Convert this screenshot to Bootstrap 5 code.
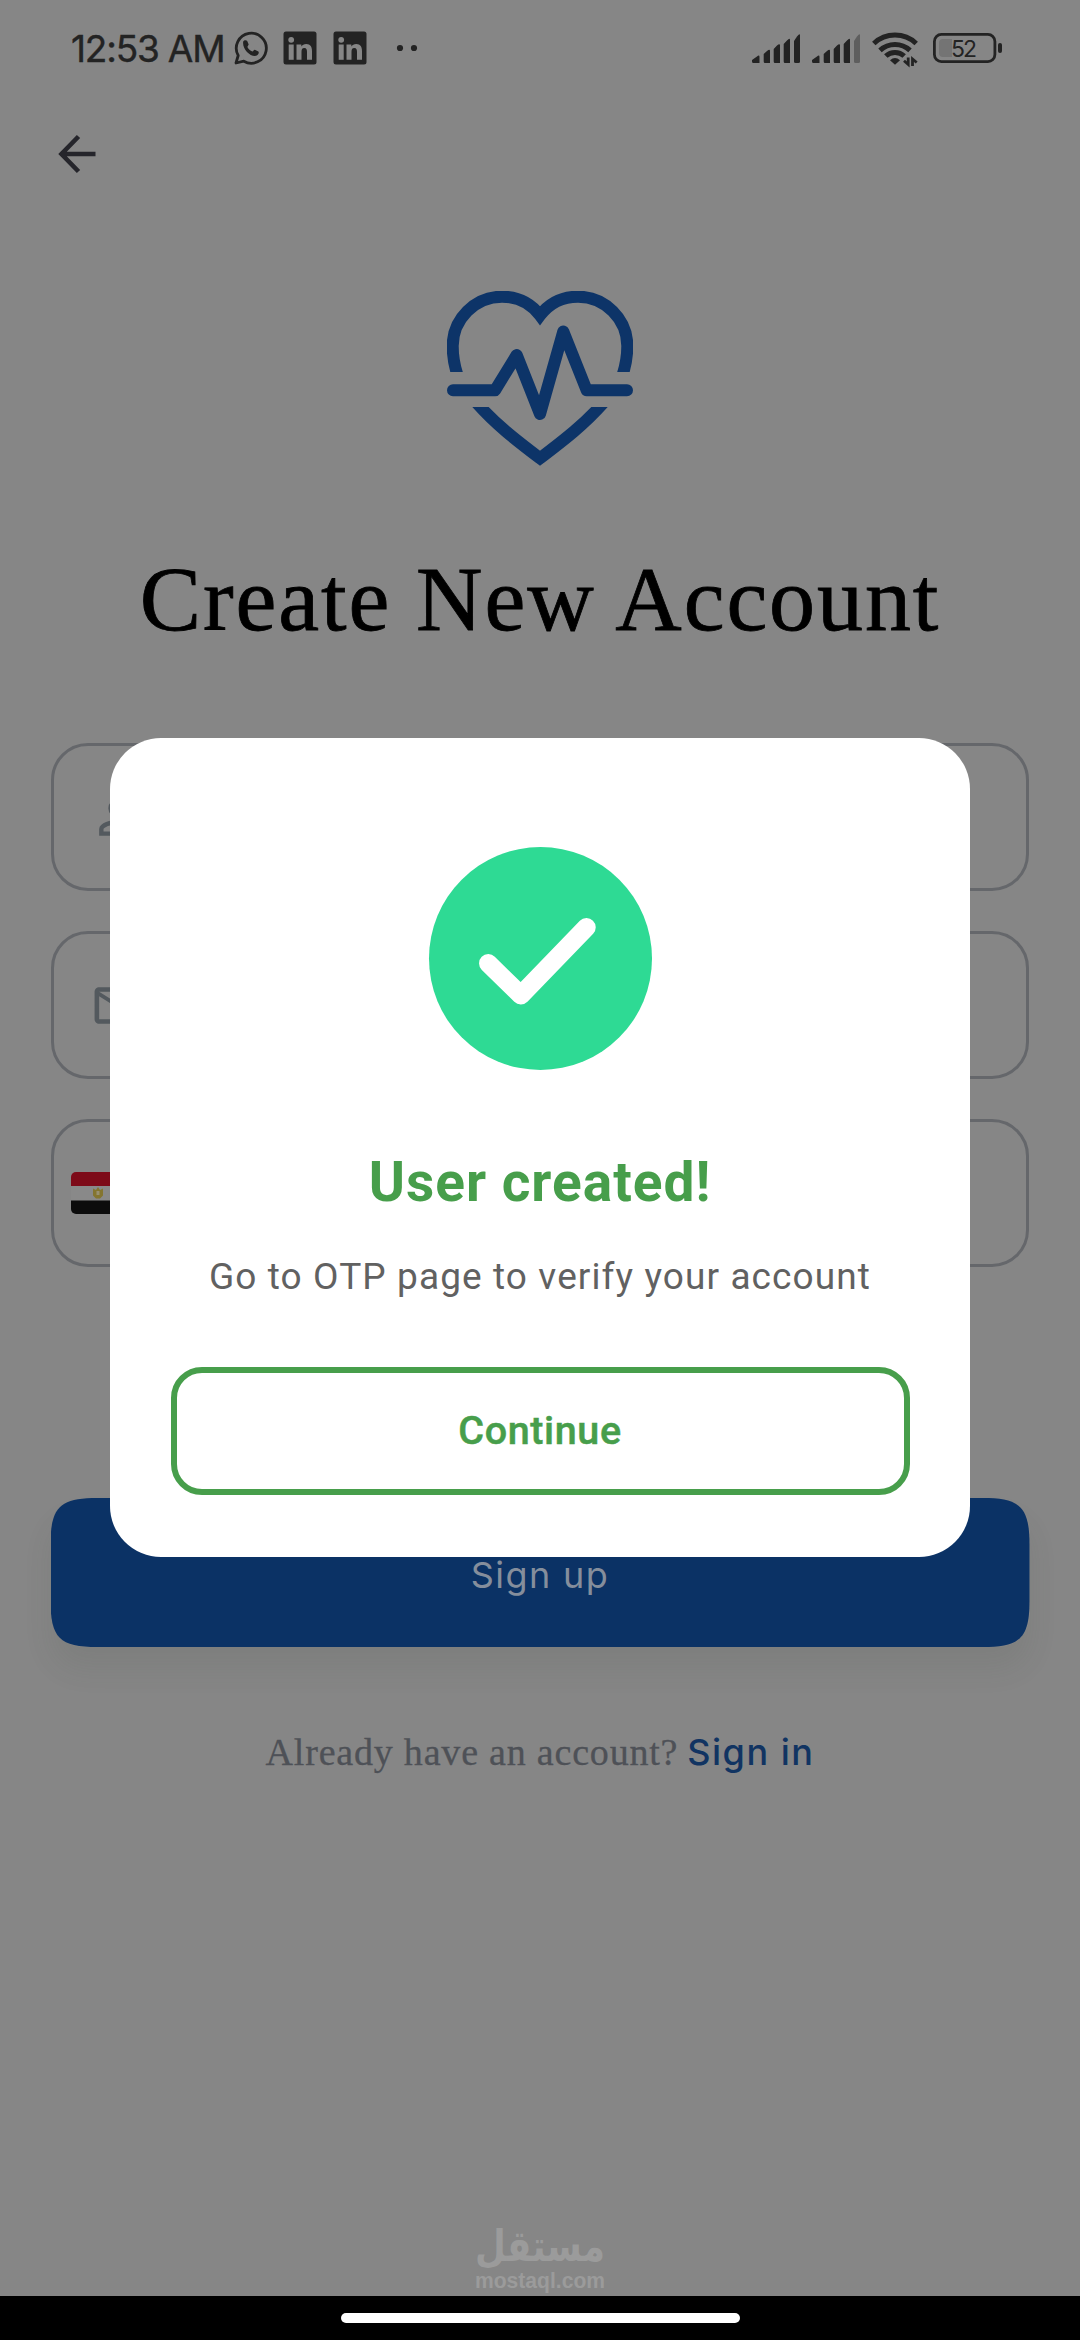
<!DOCTYPE html>
<html lang="en">
<head>
<meta charset="utf-8">
<meta name="viewport" content="width=device-width, initial-scale=1">
<title>Create New Account</title>
<link href="https://cdn.jsdelivr.net/npm/bootstrap@5.3.0/dist/css/bootstrap.min.css" rel="stylesheet">
<style>
  body { width: 1080px; height: 2340px; background: #868686; font-family: Roboto, sans-serif; overflow: hidden; }
  svg { display: block; flex: none; overflow: visible; }
  .status-bar { height: 96px; padding: 0 78px 0 71px; color: #232323; }
  .clock { font: 400 37px/1 Inter, sans-serif; letter-spacing: -1.2px; width: 163px; white-space: nowrap; -webkit-text-stroke: .4px #232323; }
  .gap-lin { margin-left: 15px; }
  .gap-dots { margin-left: 30px; }
  .gap-sig { margin-left: 12px; }
  .app-head { height: 116px; padding: 0 57px; }
  .page-title { font: 400 92px/108px "Liberation Serif", serif; letter-spacing: 1.9px; color: #000; margin-top: 79px; white-space: nowrap; -webkit-text-stroke: .8px #000; }
  .logo-row { padding-top: 79px; }
  .fields { margin: 90px 51px 0; gap: 40px; }
  .field { height: 148px; border: 3px solid #65676b; border-radius: 37px; padding-left: 36px; }
  .field.phone { padding-left: 17px; }
  .btn-signup { position: relative; z-index: 0; height: 149px; margin: 231px 50.5px 0; padding: 4px 0 0; border: 0; border-radius: 32px; box-shadow: 0 22px 28px rgba(60,70,60,.1); color: #858e9c; font: 400 36px/1 Inter, sans-serif; letter-spacing: 1.4px; }
  .btn-signup::before { content: ""; position: absolute; inset: 0; z-index: -1; background: #0b3265; clip-path: path("M0 47 C0 9 9 0 47 0 H932 C970 0 979 9 979 47 V102 C979 140 970 149 932 149 H47 C9 149 0 140 0 102 Z"); }
  .signin-row { margin-top: 83px; height: 44px; gap: 9px; }
  .ask { font: 400 38px/44px "Liberation Serif", serif; letter-spacing: .8px; color: #4e5157; -webkit-text-stroke: .3px #4e5157; }
  .go-link { font: 500 36px/44px Inter, sans-serif; letter-spacing: 1.5px; color: #113462; }
  .sys-nav { height: 44px; background: #000; }
  .home-pill { width: 399px; height: 10px; }
  .dialog-box { position: absolute; left: 110px; top: 738px; width: 860px; height: 819px; border-radius: 51px; padding: 108.5px 60.5px 0; }
  .dlg-title { font: 700 55px/64px Roboto, sans-serif; letter-spacing: 1px; color: #479e4b; margin: 80px 0 0; }
  .dlg-text { font: 400 37px/44px Roboto, sans-serif; letter-spacing: 1.1px; color: #616161; margin: 41px 0 0; white-space: nowrap; }
  .btn-continue { height: 127.5px; margin-top: 68.5px; border: 6px solid #479e4b; border-radius: 31px; color: #479e4b; font: 500 39.5px/1 Roboto, sans-serif; letter-spacing: .6px; -webkit-text-stroke: .5px #479e4b; }
</style>
</head>
<body class="d-flex flex-column position-relative">

<header class="status-bar d-flex align-items-center justify-content-between">
  <div class="d-flex align-items-center">
    <span class="clock">12:53 AM</span>
    <svg width="34" height="34" viewBox="0 0 34 34" fill="none" stroke="#232323" stroke-width="2.8">
      <path d="M2 32 L4.2 24.5 A15 15 0 1 1 9.8 30.2 Z" stroke-linejoin="round"/>
      <path d="M9.2 10.5C10 9 12.3 8.6 13.2 10l1.4 3.3c.2.8-1.3 2-1.2 2.7 1 2.1 2.8 3.8 5 4.5.7.2 1.6-1.8 2.4-1.7l3.6 1.8c1 1-.3 3.4-1.6 4-5.8 2.200-14.800-6.600-13.600-14.100z" fill="#232323" stroke="none"/>
    </svg>
    <svg class="gap-lin" width="34" height="34" viewBox="0 0 34 34"><use href="#lin"/></svg>
    <svg class="gap-lin ms-3" width="34" height="34" viewBox="0 0 34 34"><use href="#lin"/></svg>
    <svg class="gap-dots" width="20" height="6" fill="#232323"><circle cx="3" cy="3" r="3.1"/><circle cx="17" cy="3" r="3.1"/></svg>
  </div>
  <div class="d-flex align-items-center">
    <svg width="48" height="32" fill="#232323"><use href="#bars"/><path d="M42 9 L45 4.500Q48 1 48 3V29.500Q48 31 46.500 31H43.500Q42 31 42 29.500Z"/></svg>
    <svg class="gap-sig" width="48" height="32" fill="#232323"><use href="#bars"/><path opacity=".4" d="M42 9 L45 4.500Q48 1 48 3V29.500Q48 31 46.500 31H43.500Q42 31 42 29.500Z"/></svg>
    <svg class="gap-sig" width="46" height="34" viewBox="0 0 46 34" fill="none" stroke="#232323" stroke-width="5">
      <path d="M1.800 12.500A31 31 0 0 1 44.200 12.500M8 19.300A22 22 0 0 1 38 19.300M13.800 25A13.500 13.500 0 0 1 32.200 25"/>
      <path d="M18 29.200Q23 25 28 29.200L23 33.800Z" fill="#232323" stroke="none"/>
      <path d="M32.500 27.500h12v6.500h-12z" fill="#868686" stroke="#868686" stroke-width="2"/>
      <path d="M36.200 26.500V33.500L32 29.800M40.500 35V28L44.700 31.500" stroke-width="2.800"/>
    </svg>
    <svg class="gap-lin" width="69" height="30" viewBox="0 0 69 30">
      <rect x="1.400" y="1.400" width="60.500" height="27.200" rx="7" fill="none" stroke="#232323" stroke-width="2.800"/>
      <path d="M10 6h9v18h-9q-4 0-4-4V10q0-4 4-4z" fill="#747474"/>
      <rect x="65" y="10" width="4" height="10" rx="2" fill="#232323"/>
      <text x="18" y="23.500" font-family="Inter" font-size="23" textLength="26" fill="#232323">52</text>
    </svg>
  </div>
</header>

<svg width="0" height="0" class="position-absolute">
  <defs>
    <g id="lin">
      <rect x=".5" y=".5" width="33" height="33" rx="2.500" fill="#232323"/>
      <g fill="#868686"><circle cx="8.200" cy="8.800" r="2.900"/><rect x="5.700" y="13.500" width="5" height="15.300"/>
      <path d="M13.500 13.500h4.800v2.100c1-1.600 2.700-2.500 4.900-2.500 4.400 0 5.800 2.900 5.800 7v8.700h-5v-7.800c0-2-.4-3.900-2.700-3.900-2.200 0-2.800 1.700-2.800 3.800v7.900h-5z"/></g>
    </g>
    <g id="bars">
      <path d="M0 28L5 24.500Q7.500 22.500 7.500 25V31H1.500Q0 31 0 29.500ZM11.700 22L15 19Q18 16.500 18 19V31H13Q11.700 31 11.700 29.500ZM21.700 17L25 13.500Q28 11 28 13.500V31H23Q21.700 31 21.700 29.500ZM31.700 12L35 8.500Q38 5.500 38 8V31H33Q31.700 31 31.700 29.500Z"/>
    </g>
  </defs>
</svg>

<nav class="app-head d-flex align-items-center">
  <svg width="40" height="40" viewBox="0 0 40 40" fill="none" stroke="#25252b" stroke-width="4.600"><path d="M38.500 20H5M21.500 2.500L4.500 20L21.500 37.500"/></svg>
</nav>

<main class="flex-grow-1 d-flex flex-column">
  <div class="logo-row d-flex justify-content-center">
    <svg width="186" height="175" viewBox="0 0 186 175" fill="none" stroke="#0d3468" stroke-width="12">
      <defs><clipPath id="up"><rect width="186" height="81"/></clipPath><clipPath id="low"><rect y="116" width="186" height="60"/></clipPath></defs>
      <path clip-path="url(#up)" d="M11.500 87C7.500 76 5.700 66 5.700 55C5.700 28 28 5.700 55 5.700C71 5.700 84 12.500 93 24.500C102 12.500 115 5.700 131 5.700C158 5.700 180.300 28 180.300 55C180.300 66 178.500 76 174.500 87"/>
      <path d="M6 99.300H48L69.700 64L93 123L116.300 40.500L139.700 99.300H180" stroke-linecap="round" stroke-linejoin="round"/>
      <path clip-path="url(#low)" d="M28 110C48 133 69 149 93 167.300C117 149 138 133 158 110"/>
    </svg>
  </div>
  <h1 class="page-title text-center mb-0">Create New Account</h1>

  <div class="fields d-flex flex-column">
    <div class="field d-flex align-items-center">
      <svg width="55" height="55" viewBox="0 0 24 24" fill="#53595e"><path d="M12 5.900a2.100 2.100 0 1 1 0 4.200 2.100 2.100 0 0 1 0-4.200m0 9c2.970 0 6.100 1.460 6.100 2.100v1.100H5.900V17c0-.64 3.130-2.100 6.100-2.100M12 4a4 4 0 1 0 0 8 4 4 0 0 0 0-8m0 9c-2.670 0-8 1.340-8 4v3h16v-3c0-2.660-5.330-4-8-4"/></svg>
    </div>
    <div class="field d-flex align-items-center">
      <svg width="55" height="55" viewBox="0 0 24 24" fill="#53595e"><path d="M22 6c0-1.100-.9-2-2-2H4c-1.100 0-2 .9-2 2v12c0 1.100.9 2 2 2h16c1.100 0 2-.9 2-2zm-2 0-8 5-8-5zm0 12H4V8l8 5 8-5z"/></svg>
    </div>
    <div class="field phone d-flex align-items-center">
      <svg width="62" height="42" viewBox="0 0 62 42"><clipPath id="fl"><rect width="62" height="42" rx="5"/></clipPath>
        <g clip-path="url(#fl)"><rect width="62" height="42" fill="#898989"/><rect width="62" height="14" fill="#7d0a18"/><rect y="28.500" width="62" height="14" fill="#0c0c0c"/></g>
        <path d="M22 16.500l3 1.500 2-3 2 3 3-1.500v7l-3 3h-4l-3-3z" fill="#84752f"/><path d="M25.500 19h3v4h-3z" fill="#989070"/></svg>
    </div>
  </div>

  <button class="btn btn-signup">Sign up</button>

  <div class="signin-row d-flex justify-content-center">
    <span class="ask">Already have an account?</span><a class="go-link text-decoration-none" href="#">Sign in</a>
  </div>

  <div class="mt-auto d-flex justify-content-center">
    <svg width="130" height="66" viewBox="0 0 130 66" fill="#9b9b9b">
      <text x="0" y="31" direction="rtl" text-anchor="end" font-family="DejaVu Sans" font-weight="700" font-size="43" textLength="130" lengthAdjust="spacingAndGlyphs">مستقل</text>
      <text x="0" y="57.500" font-family="Liberation Sans" font-weight="700" font-size="22" textLength="130" lengthAdjust="spacingAndGlyphs">mostaql.com</text>
    </svg>
  </div>
</main>

<footer class="sys-nav d-flex justify-content-center align-items-center"><div class="home-pill bg-white rounded-pill"></div></footer>

<section class="dialog-box bg-white d-flex flex-column text-center" role="dialog">
  <svg class="mx-auto" width="223" height="223" viewBox="0 0 223 223"><circle cx="111.500" cy="111.500" r="111.500" fill="#2eda94"/><path d="M59.300 116.300L91.800 148.200L157.500 80.300" fill="none" stroke="#fff" stroke-width="18.500" stroke-linecap="round" stroke-linejoin="round"/></svg>
  <h2 class="dlg-title">User created!</h2>
  <p class="dlg-text">Go to OTP page to verify your account</p>
  <button class="btn btn-continue">Continue</button>
</section>

<script src="https://cdn.jsdelivr.net/npm/bootstrap@5.3.0/dist/js/bootstrap.bundle.min.js"></script>
</body>
</html>
